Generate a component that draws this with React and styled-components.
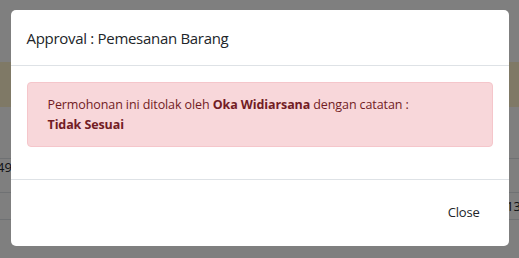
import React from "react";
import styled, { createGlobalStyle } from "styled-components";

const GlobalStyle = createGlobalStyle`
  html, body {
    margin: 0;
    padding: 0;
    background: #ffffff;
    font-family: "Open Sans", "Noto Sans", sans-serif;
    font-size: 13px;
    color: #212529;
  }
  * { box-sizing: border-box; }
`;

const Page = styled.div`
  height: 258px;
  overflow: hidden;
  padding-top: 62px;
`;

const WarningBand = styled.div`
  height: 45px;
  background: #fff3cd;
`;

const Table = styled.div`
  display: flex;
  flex-direction: column;
  margin-top: 51px;
`;

const Row = styled.div`
  display: flex;
  justify-content: ${(p) => (p.$end ? "flex-end" : "flex-start")};
  align-items: ${(p) => (p.$top ? "flex-start" : "center")};
  height: ${(p) => p.$h}px;
  border-top: 1px solid #dee2e6;
  font-size: 13px;
  line-height: 1;
`;

const Cell = styled.span`
  padding: ${(p) => (p.$top ? "2px 0 0 0" : "0")};
  margin-left: ${(p) => (p.$cut ? "-3px" : "0")};
  margin-right: ${(p) => (p.$end ? "-2px" : "0")};
`;

const Backdrop = styled.div`
  position: fixed;
  inset: 0;
  background: rgba(0, 0, 0, 0.5);
`;

const ModalWrap = styled.div`
  position: fixed;
  inset: 0;
  padding: 10px 0;
`;

const Dialog = styled.div`
  width: 498px;
  margin: 0 auto;
  background: #fff;
  border-radius: 5px;
  display: flex;
  flex-direction: column;
`;

const Header = styled.div`
  padding: 16px 16px 15px;
  border-bottom: 1px solid #dee2e6;
`;

const Title = styled.h5`
  margin: 0;
  font-size: 15px;
  letter-spacing: -0.3px;
  font-weight: 400;
  line-height: 24px;
  color: #212529;
`;

const Body = styled.div`
  padding: 16px;
`;

const Alert = styled.div`
  margin-bottom: 16px;
  padding: 12px 20px;
  background: #f8d7da;
  border: 1px solid #f5c6cb;
  border-radius: 4px;
  color: #721c24;
  font-size: 12.5px;
  letter-spacing: -0.1px;
  line-height: 19.5px;
  strong { font-weight: 700; }
`;

const Footer = styled.div`
  display: flex;
  justify-content: flex-end;
  align-items: center;
  padding: 12px;
  border-top: 1px solid #dee2e6;
`;

const Button = styled.button`
  margin: 4px;
  padding: 6px 12px;
  border: 1px solid transparent;
  background: transparent;
  font-family: inherit;
  font-size: 13px;
  letter-spacing: -0.2px;
  line-height: 19.5px;
  color: #212529;
  cursor: pointer;
`;

export default function App() {
  return (
    <>
      <GlobalStyle />
      <Page>
        <WarningBand />
        <Table>
          <Row $h={34} $top>
            <Cell $top $cut>49</Cell>
          </Row>
          <Row $h={27} $end>
            <Cell $end>13</Cell>
          </Row>
          <Row $h={40} />
        </Table>
      </Page>
      <Backdrop />
      <ModalWrap>
        <Dialog>
          <Header>
            <Title>Approval : Pemesanan Barang</Title>
          </Header>
          <Body>
            <Alert>
              Permohonan ini ditolak oleh <strong>Oka Widiarsana</strong> dengan catatan :
              <br />
              <strong>Tidak Sesuai</strong>
            </Alert>
          </Body>
          <Footer>
            <Button>Close</Button>
          </Footer>
        </Dialog>
      </ModalWrap>
    </>
  );
}
